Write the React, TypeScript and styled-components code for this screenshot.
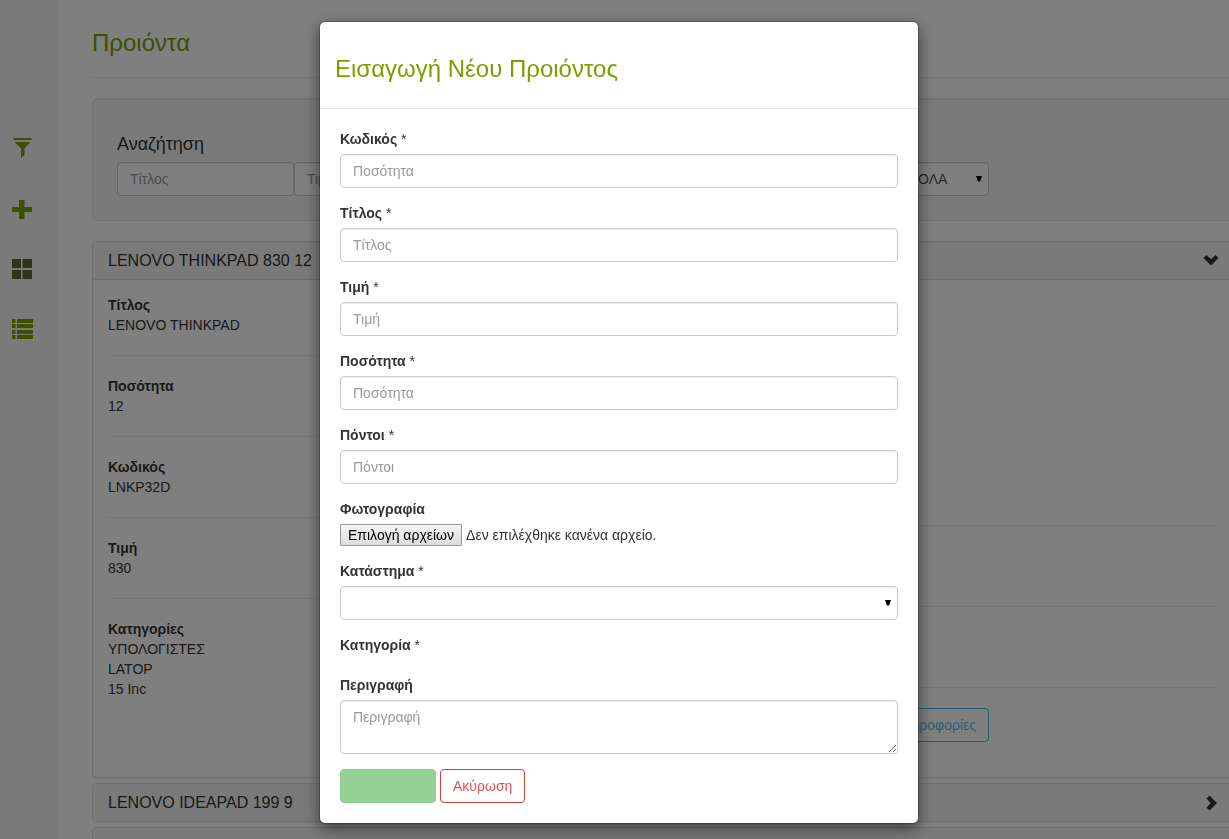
import React from "react";
import styled, { createGlobalStyle, css } from "styled-components";

const GlobalStyle = createGlobalStyle`
  *, *::before, *::after { box-sizing: border-box; }
  body {
    margin: 0;
    background: #fff;
    color: #333;
    font-family: "Liberation Sans", Arial, Helvetica, sans-serif;
    font-size: 14px;
    line-height: 20px;
  }
  button, input, select, textarea { font: inherit; }
`;

/* ---------- Page behind the dialog ---------- */

const Page = styled.div`
  display: flex;
  height: 100vh;
  overflow: hidden;
`;

const Sidebar = styled.nav`
  flex: none;
  display: flex;
  flex-direction: column;
  gap: 36px;
  width: 57px;
  padding: 136px 0 0 10px;
  background: #f5f5f5;
`;

const IconButton = styled.button<{ $active?: boolean }>`
  display: flex;
  width: 24px;
  height: 24px;
  padding: 0;
  border: 0;
  background: none;
  color: ${(p) => (p.$active ? "#5c6836" : "#7aa000")};
`;

const Main = styled.main`
  flex: 1;
  min-width: 0;
  margin-right: -6px;
  padding: 30px 0 0 35px;
`;

const Heading = styled.h3`
  margin: 0;
  color: #7aa000;
  font-size: 24px;
  font-weight: 400;
  line-height: 26px;
`;

const PageHeader = styled.header`
  margin-bottom: 20px;
  padding-bottom: 21px;
  border-bottom: 1px solid #eee;
`;

const SearchWell = styled.section`
  margin-bottom: 20px;
  padding: 35px 24px 24px;
  border: 1px solid #e3e3e3;
  border-radius: 6px;
  background: #f5f5f5;
  box-shadow: inset 0 1px 1px rgba(0, 0, 0, 0.05);
`;

const SearchTitle = styled.h4`
  margin: 0 0 8px;
  font-size: 18px;
  font-weight: 400;
  line-height: 20px;
`;

const SearchRow = styled.form`
  display: flex;
  max-width: 872px;
`;

const controlStyle = css`
  display: block;
  width: 100%;
  height: 34px;
  padding: 6px 12px;
  border: 1px solid #ccc;
  border-radius: 4px;
  background: #fff;
  color: #555;
  box-shadow: inset 0 1px 1px rgba(0, 0, 0, 0.075);
  &::placeholder { color: #999; opacity: 1; }
`;

const TextInput = styled.input`
  ${controlStyle}
`;

const SearchInput = styled(TextInput)`
  width: 177px;
`;

const TextArea = styled.textarea`
  ${controlStyle}
  height: 54px;
  resize: vertical;
`;

const SelectBox = styled.div<{ $compact?: boolean }>`
  position: relative;
  ${(p) => p.$compact && "width: 84px; margin-left: auto;"}
  svg {
    position: absolute;
    top: 13px;
    right: 6px;
    pointer-events: none;
  }
`;

const Select = styled.select`
  ${controlStyle}
  appearance: none;
`;

const Panel = styled.section`
  margin-bottom: 5px;
  border: 1px solid #ddd;
  border-radius: 4px;
  box-shadow: 0 1px 1px rgba(0, 0, 0, 0.05);
`;

const PanelHeading = styled.button<{ $open?: boolean }>`
  display: flex;
  align-items: center;
  justify-content: space-between;
  width: 100%;
  height: ${(p) => (p.$open ? 38 : 37)}px;
  padding: 0 15px;
  border: 0;
  border-bottom: ${(p) => (p.$open ? "1px solid #ddd" : "0")};
  border-radius: 3px 3px 0 0;
  background: #f5f5f5;
  color: #333;
  font-size: 16px;
  text-align: left;
`;

const PanelBody = styled.div`
  display: grid;
  grid-template-columns: 1fr 1fr;
  gap: 30px;
  padding: 15px 15px 35px;
`;

const Details = styled.dl`
  margin: 0 0 23px;
`;

const Detail = styled.div`
  padding-bottom: 20px;
  & + & {
    padding-top: 20px;
    border-top: 1px solid #eee;
  }
`;

const Term = styled.dt`
  font-weight: 700;
`;

const Value = styled.dd`
  margin: 0;
`;

const SideColumn = styled.div`
  display: flex;
  flex-direction: column;
  justify-content: flex-end;
`;

const Rule = styled.hr`
  width: 100%;
  margin: 0 0 80px;
  border: 0;
  border-top: 1px solid #eee;
  &:last-of-type { margin-bottom: 20px; }
`;

const Button = styled.button<{ $tone: "info" | "danger" | "success" }>`
  height: 34px;
  padding: 6px 12px;
  border: 1px solid;
  border-radius: 4px;
  background: #fff;
  ${(p) => p.$tone === "info" && "border-color: #46b8da; color: #5bc0de;"}
  ${(p) => p.$tone === "danger" && "border-color: #d43f3a; color: #d9534f;"}
  ${(p) => p.$tone === "success" && "width: 96px; border-color: #8fce8f; background: #95d195;"}
`;

const MoreButton = styled(Button)`
  align-self: flex-end;
  margin-right: 230px;
`;

/* ---------- Dialog ---------- */

const Backdrop = styled.div`
  position: fixed;
  inset: 0;
  padding: 21px 0 0 9px;
  overflow: hidden;
  background: rgba(0, 0, 0, 0.5);
`;

const Dialog = styled.div`
  max-width: 600px;
  margin: 0 auto;
  border: 1px solid rgba(0, 0, 0, 0.2);
  border-radius: 6px;
  background: #fff;
  background-clip: padding-box;
  box-shadow: 0 5px 15px rgba(0, 0, 0, 0.5);
`;

const DialogHeader = styled.header`
  padding: 34px 15px 26px;
  border-bottom: 1px solid #e5e5e5;
`;

const DialogForm = styled.form`
  display: flex;
  flex-direction: column;
  gap: 15px;
  padding: 20px;
`;

const Group = styled.div`
  display: flex;
  flex-direction: column;
  gap: 5px;
`;

const Label = styled.label`
  font-weight: 700;
  span { font-weight: 400; }
`;

const EmptyGroup = styled(Group)`
  padding-bottom: 5px;
`;

const FilePicker = styled.div`
  position: relative;
  display: flex;
  align-items: center;
  gap: 4px;
  height: 22px;
  input {
    position: absolute;
    inset: 0;
    width: 100%;
    opacity: 0;
  }
`;

const FileButton = styled.span`
  height: 22px;
  padding: 0 7px;
  border: 1px solid #999;
  border-radius: 1px;
  background: linear-gradient(#f6f6f6, #dcdcdc);
  color: #000;
`;

const Actions = styled.div`
  display: flex;
  gap: 4px;
`;

/* ---------- Icons ---------- */

const icon = { width: 24, height: 24, viewBox: "0 0 24 24", fill: "currentColor", "aria-hidden": true } as const;

const FilterIcon = () => (
  <svg {...icon}>
    <path d="M3.500 2h18v2h-18zM4.500 6h16L14.500 12.500v6.500l-3.500 3v-9.500z" />
  </svg>
);
const PlusIcon = () => (
  <svg {...icon}>
    <path d="M9 4h5.500v7h7.500v5h-7.500v7h-5.500v-7h-7v-5h7z" />
  </svg>
);
const GridIcon = () => (
  <svg {...icon}>
    <path d="M2 3h9v9h-9zM12.500 3h9.500v9h-9.500zM2 14h9v9h-9zM12.500 14h9.500v9h-9.500z" />
  </svg>
);
const ListIcon = () => (
  <svg {...icon}>
    <path d="M2 3h3.500v4h-3.500zM7 3h16v4h-16zM2 8h3.500v4h-3.500zM7 8h16v4h-16zM2 14h3.500v4h-3.500zM7 14h16v4h-16zM2 19h3.500v4h-3.500zM7 19h16v4h-16z" />
  </svg>
);
const ChevronDown = () => (
  <svg width="16" height="16" viewBox="0 0 16 16" fill="currentColor" aria-hidden>
    <path d="M.5 5l3-3L8 6.300 12.500 2l3 3L8 12.500z" />
  </svg>
);
const ChevronRight = () => (
  <svg width="16" height="16" viewBox="0 0 16 16" fill="currentColor" aria-hidden>
    <path d="M6.500.5l-3 3L7.700 8l-4.200 4.500 3 3L14 8z" />
  </svg>
);
const Arrow = () => (
  <svg width="8" height="8" viewBox="0 0 8 8" fill="#000" aria-hidden>
    <path d="M1 1h6L5 6.500H3z" />
  </svg>
);

/* ---------- Content ---------- */

const details: [string, string[]][] = [
  ["Τίτλος", ["LENOVO THINKPAD"]],
  ["Ποσότητα", ["12"]],
  ["Κωδικός", ["LNKP32D"]],
  ["Τιμή", ["830"]],
  ["Κατηγορίες", ["ΥΠΟΛΟΓΙΣΤΕΣ", "LATOP", "15 Inc"]],
];

const fields = [
  { id: "code", label: "Κωδικός", placeholder: "Ποσότητα" },
  { id: "title", label: "Τίτλος", placeholder: "Τίτλος" },
  { id: "price", label: "Τιμή", placeholder: "Τιμή" },
  { id: "quantity", label: "Ποσότητα", placeholder: "Ποσότητα" },
  { id: "points", label: "Πόντοι", placeholder: "Πόντοι" },
];

const searchFields = ["Τίτλος", "Τιμή", "Κωδικός", "Ποσότητα"];

export default function App() {
  return (
    <>
      <GlobalStyle />
      <Page>
        <Sidebar>
          <IconButton aria-label="Φίλτρο"><FilterIcon /></IconButton>
          <IconButton aria-label="Προσθήκη"><PlusIcon /></IconButton>
          <IconButton aria-label="Πλέγμα" $active><GridIcon /></IconButton>
          <IconButton aria-label="Λίστα"><ListIcon /></IconButton>
        </Sidebar>
        <Main>
          <PageHeader>
            <Heading>Προιόντα</Heading>
          </PageHeader>
          <SearchWell>
            <SearchTitle>Αναζήτηση</SearchTitle>
            <SearchRow>
              {searchFields.map((name) => (
                <SearchInput key={name} aria-label={name} placeholder={name} />
              ))}
              <SelectBox $compact>
                <Select aria-label="Κατηγορία">
                  <option>ΟΛΑ</option>
                </Select>
                <Arrow />
              </SelectBox>
            </SearchRow>
          </SearchWell>
          <Panel>
            <PanelHeading $open>LENOVO THINKPAD 830 12<ChevronDown /></PanelHeading>
            <PanelBody>
              <Details>
                {details.map(([term, values]) => (
                  <Detail key={term}>
                    <Term>{term}</Term>
                    {values.map((v) => <Value key={v}>{v}</Value>)}
                  </Detail>
                ))}
              </Details>
              <SideColumn>
                <Rule />
                <Rule />
                <Rule />
                <MoreButton $tone="info">Πληροφορίες</MoreButton>
              </SideColumn>
            </PanelBody>
          </Panel>
          <Panel>
            <PanelHeading>LENOVO IDEAPAD 199 9<ChevronRight /></PanelHeading>
          </Panel>
          <Panel>
            <PanelHeading aria-label="Προιόν"><span /><ChevronRight /></PanelHeading>
          </Panel>
        </Main>
      </Page>
      <Backdrop>
        <Dialog role="dialog" aria-labelledby="dialog-title">
          <DialogHeader>
            <Heading id="dialog-title">Εισαγωγή Νέου Προιόντος</Heading>
          </DialogHeader>
          <DialogForm>
            {fields.map((f) => (
              <Group key={f.id}>
                <Label htmlFor={f.id}>{f.label} <span>*</span></Label>
                <TextInput id={f.id} placeholder={f.placeholder} />
              </Group>
            ))}
            <Group>
              <Label htmlFor="photo">Φωτογραφία</Label>
              <FilePicker>
                <FileButton>Επιλογή αρχείων</FileButton>
                <span>Δεν επιλέχθηκε κανένα αρχείο.</span>
                <input id="photo" type="file" multiple />
              </FilePicker>
            </Group>
            <Group>
              <Label htmlFor="store">Κατάστημα <span>*</span></Label>
              <SelectBox>
                <Select id="store"><option /></Select>
                <Arrow />
              </SelectBox>
            </Group>
            <EmptyGroup>
              <Label as="div">Κατηγορία <span>*</span></Label>
            </EmptyGroup>
            <Group>
              <Label htmlFor="description">Περιγραφή</Label>
              <TextArea id="description" placeholder="Περιγραφή" />
            </Group>
            <Actions>
              <Button type="button" $tone="success" aria-label="Αποθήκευση" disabled />
              <Button type="button" $tone="danger">Ακύρωση</Button>
            </Actions>
          </DialogForm>
        </Dialog>
      </Backdrop>
    </>
  );
}
